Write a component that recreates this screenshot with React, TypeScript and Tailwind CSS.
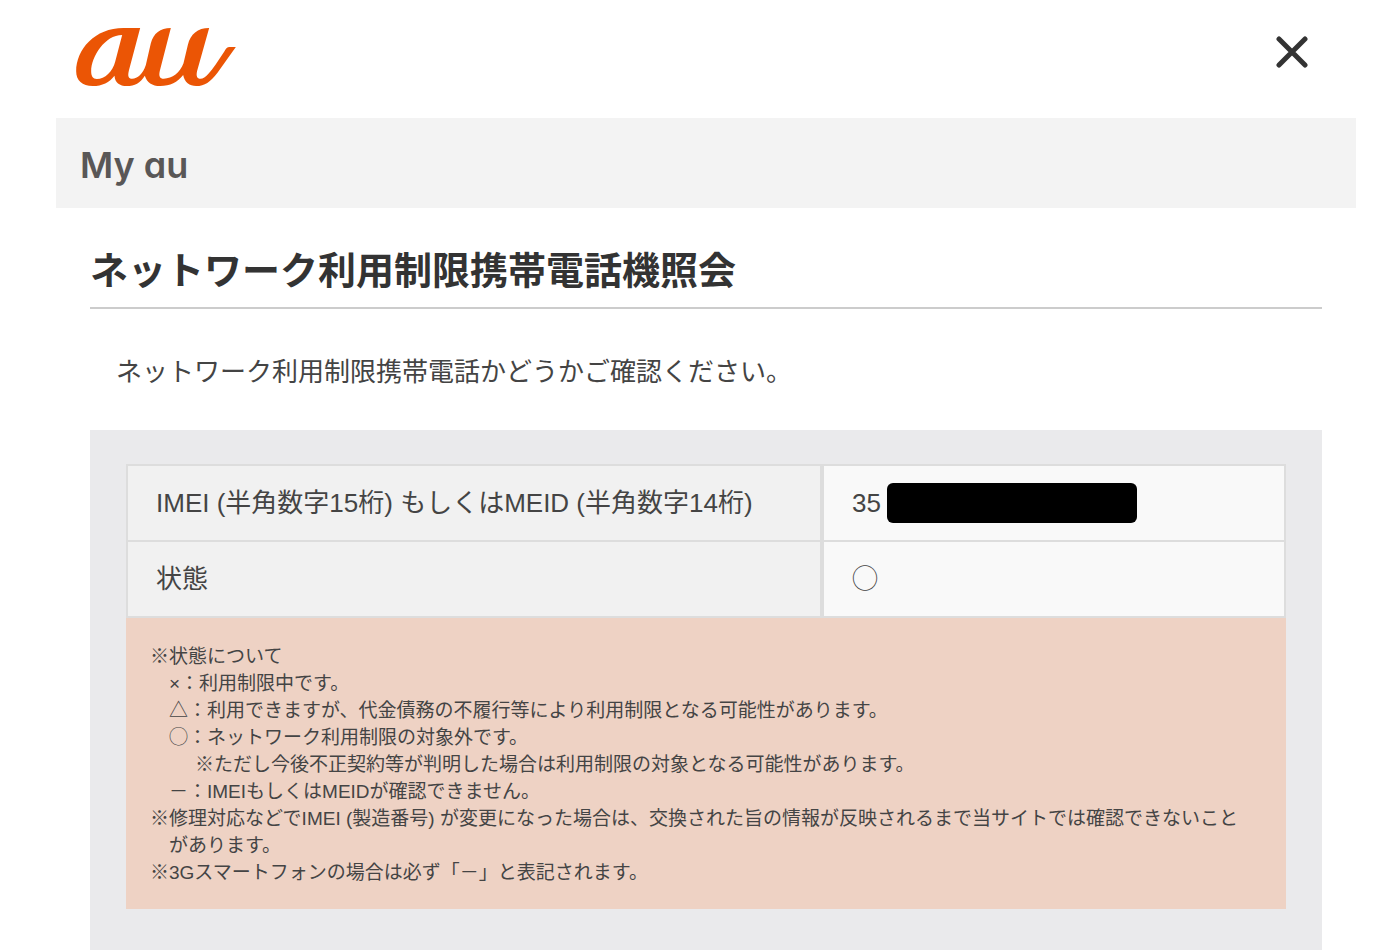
import type { ReactNode } from 'react'

interface ResultRow {
  label: string
  value: ReactNode
}

const resultRows: ResultRow[] = [
  {
    label: 'IMEI (半角数字15桁) もしくはMEID (半角数字14桁)',
    value: (
      <span className="flex items-center gap-1.5">
        35
        <span className="h-10 w-[250px] rounded-md bg-black" />
      </span>
    ),
  },
  { label: '状態', value: '◯' },
]

const statusNotes = [
  { text: '×：利用制限中です。' },
  { text: '△：利用できますが、代金債務の不履行等により利用制限となる可能性があります。' },
  {
    text: '◯：ネットワーク利用制限の対象外です。',
    sub: '※ただし今後不正契約等が判明した場合は利用制限の対象となる可能性があります。',
  },
  { text: '－：IMEIもしくはMEIDが確認できません。' },
]

const generalNotes = [
  '※修理対応などでIMEI (製造番号) が変更になった場合は、交換された旨の情報が反映されるまで当サイトでは確認できないことがあります。',
  '※3Gスマートフォンの場合は必ず「－」と表記されます。',
]

function AuLogo() {
  return (
    <svg viewBox="48 54 479 174" className="h-[58px] w-40" fill="#eb5505" role="img" aria-label="au">
      <path
        fillRule="evenodd"
        d="M240 54L206 182C202 198 205 206 216 206C232 206 248 192 257 165L272 100C280 70 300 54 332 54L299 182C295 198 299 206 311 206C336 206 360 188 370 160L383 105C391 72 412 54 447 54L411 182C407 198 411 206 421 206C436 206 453 182 466 164L492 125C498 115 501 111 508 111H527L472 188C450 216 434 228 408 228C388 228 373 217 369 195C352 217 330 228 300 228C276 228 260 217 254 197C240 219 224 228 200 228C178 228 164 217 163 197C148 217 126 228 98 228C66 228 48 212 48 184C48 118 104 54 190 54ZM186 75C134 75 93 140 93 184C93 199 98 207 110 207C134 207 158 184 165 155Z"
      />
    </svg>
  )
}

function CloseIcon() {
  return (
    <svg viewBox="0 0 32 32" className="size-8" stroke="#333" strokeWidth="5" strokeLinecap="round" aria-hidden="true">
      <path d="M3 3L29 29M29 3L3 29" />
    </svg>
  )
}

export default function App() {
  return (
    <div className="min-h-screen bg-white pr-[41px] pl-14 font-['Liberation_Sans','Noto_Sans_CJK_JP',sans-serif] text-[26px] text-[#444]">
      <header className="flex items-start justify-between pt-7 pr-12 pb-8 pl-5">
        <a href="#">
          <AuLogo />
        </a>
        <button type="button" aria-label="閉じる" className="mt-2">
          <CloseIcon />
        </button>
      </header>

      <div className="flex h-[90px] items-center bg-[#f3f3f3] px-6 pt-1">
        <p className="font-['Inter',sans-serif] text-4xl font-semibold text-[#595757] [font-feature-settings:'cv11']">
          My au
        </p>
      </div>

      <main className="px-[34px]">
        <h1 className="border-b-2 border-[#ccc] pt-9 pb-2 text-[38px] leading-[55px] font-bold text-[#333]">
          ネットワーク利用制限携帯電話機照会
        </h1>

        <p className="px-[26px] pt-[45px] pb-10 leading-9">ネットワーク利用制限携帯電話かどうかご確認ください。</p>

        <section className="bg-[#eaeaec] px-9 pt-[34px] pb-16">
          <table className="w-full table-fixed border-separate border-spacing-0 border-t-2 border-[#ddd]">
            <tbody>
              {resultRows.map((row) => (
                <tr key={row.label} className="h-[76px]">
                  <th
                    scope="row"
                    className="w-3/5 border-x-2 border-b-2 border-[#ddd] bg-[#f1f1f1] px-7 text-left font-normal"
                  >
                    {row.label}
                  </th>
                  <td className="border-x-2 border-b-2 border-[#ddd] bg-[#f9f9f9] px-7">{row.value}</td>
                </tr>
              ))}
            </tbody>
          </table>

          <div className="bg-[#eed2c4] pt-[25px] pr-8 pb-[23px] pl-6 text-[19px] leading-[27px]">
            <p>※状態について</p>
            <ul className="pl-[19px]">
              {statusNotes.map((note) => (
                <li key={note.text}>
                  {note.text}
                  {note.sub && <p className="pl-[26px]">{note.sub}</p>}
                </li>
              ))}
            </ul>
            {generalNotes.map((note) => (
              <p key={note} className="pl-[19px] -indent-[19px]">
                {note}
              </p>
            ))}
          </div>
        </section>
      </main>
    </div>
  )
}
